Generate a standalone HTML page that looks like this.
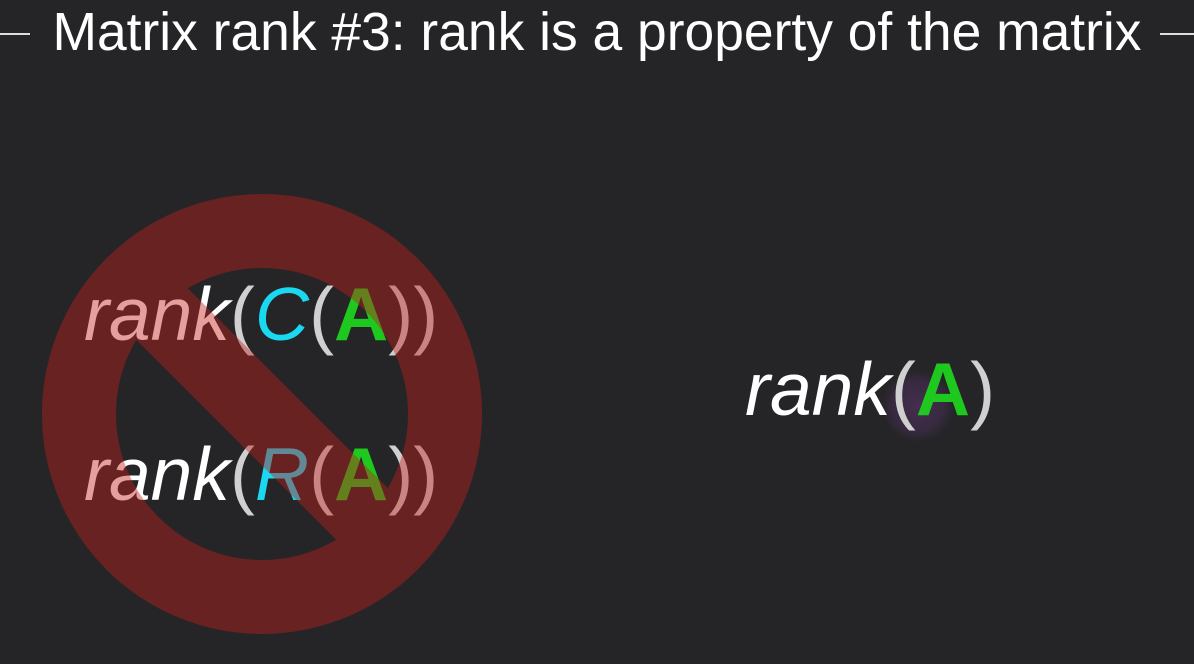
<!DOCTYPE html>
<html><head><style>
html,body{margin:0;padding:0;}
body{width:1194px;height:664px;background:#252527;position:relative;overflow:hidden;font-family:"Liberation Sans",sans-serif;}
.t{position:absolute;left:0;width:1194px;top:2px;text-align:center;color:#fff;font-size:53.4px;}
.ln{position:absolute;top:33px;height:2px;background:#ddd;}
.e{position:absolute;font-size:75px;white-space:nowrap;line-height:1;}
.i{font-style:italic;color:#fff;}
.p{color:#d0d0d0;}
.c{color:#1ad8f0;font-style:italic;}
.a{color:#1ec81e;font-weight:bold;}
</style></head><body>
<div class="ln" style="left:0;width:30px"></div>
<div class="ln" style="left:1160px;width:34px"></div>
<div class="t">Matrix rank #3: rank is a property of the matrix</div>
<div class="e" style="left:84px;top:277px"><span class="i">rank</span><span class="p">(</span><span class="c">C</span><span class="p">(</span><span class="a">A</span><span class="p">))</span></div>
<div class="e" style="left:84px;top:437px"><span class="i">rank</span><span class="p">(</span><span class="c">R</span><span class="p">(</span><span class="a">A</span><span class="p">))</span></div>
<svg width="1194" height="664" style="position:absolute;left:0;top:0">
<defs><clipPath id="cp"><circle cx="262" cy="414" r="185"/></clipPath>
<radialGradient id="rg"><stop offset="0" stop-color="rgba(100,55,120,0.5)"/><stop offset="0.7" stop-color="rgba(90,50,110,0.35)"/><stop offset="1" stop-color="rgba(90,50,110,0)"/></radialGradient></defs>
<g opacity="0.42">
<circle cx="262" cy="414" r="183" fill="none" stroke="rgb(195,30,26)" stroke-width="74"/>
<line x1="90" y1="242" x2="434" y2="586" stroke="rgb(195,30,26)" stroke-width="73" clip-path="url(#cp)"/>
</g>
<circle cx="918" cy="406" r="36" fill="url(#rg)"/>
</svg>
<div class="e" style="left:745px;top:352px"><span class="i">rank</span><span class="p">(</span><span class="a">A</span><span class="p">)</span></div>
</body></html>
